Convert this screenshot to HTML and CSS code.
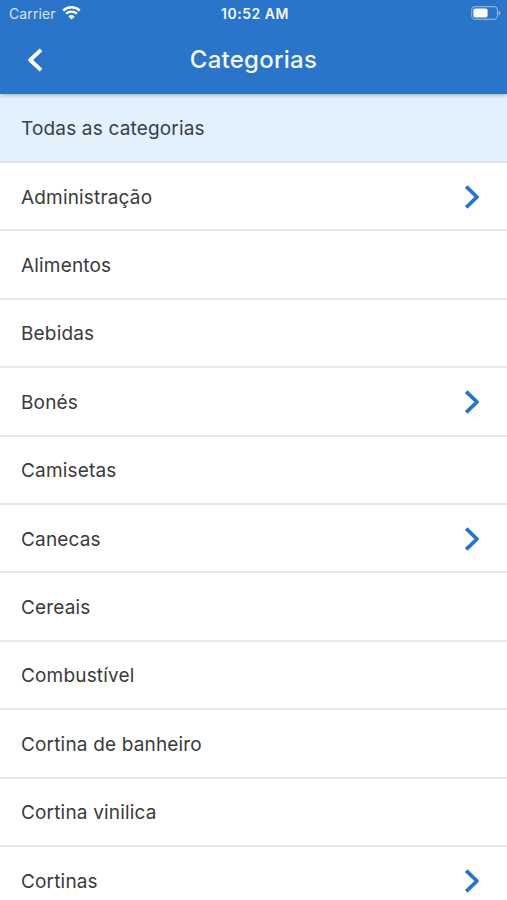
FILE: index.html
```html
<!DOCTYPE html>
<html lang="pt-BR">
<head>
    <meta charset="UTF-8">
    <meta name="viewport" content="width=device-width, initial-scale=1.0">
    <title>Categorias</title>
    <link rel="stylesheet" href="styles.css">
</head>
<body>

<header class="header">
    <div class="status-bar">
        <div class="carrier">
            <span>Carrier</span>
            <svg class="wifi" width="19" height="14" viewBox="0 0 19 14">
                <path d="M1.2 4.6a12 12 0 0 1 16.6 0M4.1 7.7a7.8 7.8 0 0 1 10.8 0" fill="none" stroke="#fff" stroke-width="2.3"/>
                <path d="M9.5 13.6L6.4 10.4a4.4 4.4 0 0 1 6.2 0z" fill="#fff"/>
            </svg>
        </div>
        <div class="clock">10:52 AM</div>
        <div class="battery">
            <svg width="30" height="14" viewBox="0 0 30 14">
                <rect x="0.7" y="0.6" width="25.8" height="12.8" rx="3.6" fill="none" stroke="#fff" stroke-opacity="0.45" stroke-width="1.1"/>
                <rect x="2.4" y="2.4" width="14.2" height="9.2" rx="1.8" fill="#fff"/>
                <path d="M27.6 4.7c2.4.8 2.4 3.8 0 4.6z" fill="#fff" fill-opacity="0.5"/>
            </svg>
        </div>
    </div>
    <div class="nav-bar">
        <a class="back-btn" href="#" aria-label="Voltar">
            <svg width="17" height="26" viewBox="0 0 17 26">
                <path d="M14 2.8L3.2 13 14 23.2" fill="none" stroke="#fff" stroke-width="3.9" stroke-linejoin="round"/>
            </svg>
        </a>
        <h1>Categorias</h1>
    </div>
</header>

<ul class="category-list">
    <li class="category-item selected">Todas as categorias</li>
    <li class="category-item has-children">Administração</li>
    <li class="category-item">Alimentos</li>
    <li class="category-item">Bebidas</li>
    <li class="category-item has-children">Bonés</li>
    <li class="category-item">Camisetas</li>
    <li class="category-item has-children">Canecas</li>
    <li class="category-item">Cereais</li>
    <li class="category-item">Combustível</li>
    <li class="category-item">Cortina de banheiro</li>
    <li class="category-item">Cortina vinilica</li>
    <li class="category-item has-children">Cortinas</li>
</ul>

<script>
    // Categories with subcategories get an arrow on the right
    document.querySelectorAll(".has-children").forEach((item) => {
        item.insertAdjacentHTML("beforeend", `
            <svg class="arrow" width="16" height="26" viewBox="0 0 16 26">
                <path d="M2.2 2.6L13 13 2.2 23.4" fill="none" stroke="#2874c8" stroke-width="3.8" stroke-linejoin="round"/>
            </svg>
        `);
    });
</script>

</body>
</html>
```
FILE: styles.css
```css
body {
    font-family: Inter, sans-serif;
    background-color: #fff;
    color: #3a3a3a;
    margin: 0;
    height: 100vh;
    overflow: hidden;
}
.header {
    position: relative;
    height: 94px;
    background-color: #2a74ca;
    color: #f4f8fd;
    box-shadow: 0 1px 4px rgba(0, 0, 0, 0.3);
}
.status-bar {
    display: grid;
    grid-template-columns: 1fr auto 1fr;
    align-items: center;
    height: 26px;
    padding: 0 6px 0 9px;
    font-size: 14px;
}
.carrier {
    display: flex;
    align-items: center;
    gap: 6px;
    letter-spacing: 0.1px;
}
.carrier span {
    opacity: 0.85;
}
.clock {
    font-weight: 600;
    letter-spacing: 0.5px;
}
.battery {
    display: flex;
    justify-content: flex-end;
}
.nav-bar {
    display: grid;
    grid-template-columns: 60px 1fr 60px;
    align-items: center;
    height: 67px;
}
.back-btn {
    display: flex;
    padding-left: 27px;
}
h1 {
    margin: 0;
    font-size: 24px;
    font-weight: 500;
    letter-spacing: 0.25px;
    text-align: center;
}
.category-list {
    list-style: none;
    margin: 0;
    padding: 0;
}
.category-item {
    display: flex;
    align-items: center;
    justify-content: space-between;
    box-sizing: border-box;
    height: 68.4px;
    padding: 2px 27px 0 21px;
    border-bottom: 2px solid #e8e8e8;
    font-size: 19px;
    letter-spacing: 0.17px;
}
.selected {
    height: 69px;
    background-color: #e3f1fc;
    color: #33424d;
    border-bottom-color: #dfe5ea;
}
```
